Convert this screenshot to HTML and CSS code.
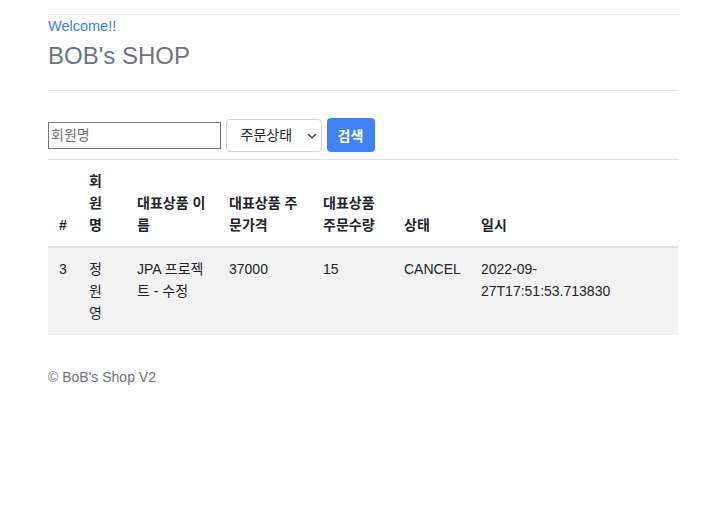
FILE: index.html
```html
<!DOCTYPE html>
<html lang="ko">
<head>
<meta charset="utf-8">
<title>BOB's SHOP</title>
<link rel="stylesheet" href="styles.css">
</head>
<body>
<div class="container">
  <header class="header">
    <a class="welcome" href="#">Welcome!!</a>
    <h3 class="brand">BOB's SHOP</h3>
  </header>

  <form class="search" onsubmit="return false">
    <input class="name-input" type="text" placeholder="회원명">
    <div class="select-wrap">
      <select class="status-select">
        <option>주문상태</option>
        <option>ORDER</option>
        <option>CANCEL</option>
      </select>
      <svg class="chevron" viewBox="0 0 16 16" width="10" height="10" aria-hidden="true">
        <path d="M2.5 5.5l5.5 5.5 5.5-5.5" fill="none" stroke="#343a40" stroke-width="2.2" stroke-linecap="round" stroke-linejoin="round"/>
      </svg>
    </div>
    <button class="btn-search" type="submit">검색</button>
  </form>

  <table class="orders">
    <colgroup>
      <col class="c-id">
      <col class="c-member">
      <col class="c-item">
      <col class="c-price">
      <col class="c-qty">
      <col class="c-status">
      <col class="c-date">
    </colgroup>
    <thead>
      <tr>
        <th>#</th>
        <th class="narrow">회원명</th>
        <th class="tight">대표상품 이름</th>
        <th class="tight2">대표상품 주문가격</th>
        <th>대표상품 주문수량</th>
        <th class="tight2">상태</th>
        <th class="wide">일시</th>
      </tr>
    </thead>
    <tbody>
      <tr>
        <td>3</td>
        <td class="narrow">정원영</td>
        <td class="tight">JPA 프로젝트 - 수정</td>
        <td class="tight2">37000</td>
        <td>15</td>
        <td class="tight2">CANCEL</td>
        <td class="wide">2022-09-27T17:51:53.713830</td>
      </tr>
    </tbody>
  </table>

  <footer class="footer">© BoB's Shop V2</footer>
</div>
</body>
</html>
```

FILE: styles.css
```css
*, *::before, *::after {
  box-sizing: border-box;
}

html, body {
  margin: 0;
  padding: 0;
  background: #ffffff;
}

body {
  font-family: "Liberation Sans", "Noto Sans CJK KR", sans-serif;
  font-size: 14px;
  line-height: 21px;
  color: #212529;
}

.container {
  width: 630px;
  margin: 14px 44px 0 48px;
}

/* header */
.header {
  border-top: 1px solid #e5e5e5;
  border-bottom: 1px solid #e5e5e5;
  padding-bottom: 20px;
}

.welcome {
  display: block;
  color: #3b7ef6;
  text-decoration: none;
  font-size: 14.5px;
  line-height: 22px;
}

.brand {
  margin: 4px 0 0;
  font-size: 24px;
  line-height: 29px;
  font-weight: 400;
  color: #6c757d;
}

/* search form */
.search {
  display: flex;
  align-items: center;
  gap: 4px;
  margin-top: 27px;
  height: 34px;
}

.name-input {
  width: 173px;
  height: 27px;
  margin: 0;
  padding: 1px 2px;
  border: 1px solid #767676;
  border-radius: 0;
  font-family: inherit;
  font-size: 14px;
  color: #212529;
  background: #fff;
  outline: none;
}

.name-input::placeholder {
  color: #6f6f6f;
}

.select-wrap {
  position: relative;
  margin-left: 0.5px;
}

.status-select {
  display: block;
  width: 96px;
  height: 33px;
  margin: 0;
  padding: 0 22px 0 14px;
  border: 1px solid #ced4da;
  border-radius: 4px;
  background: #fff;
  font-family: inherit;
  font-size: 14px;
  color: #212529;
  appearance: none;
  -webkit-appearance: none;
  outline: none;
}

.chevron {
  position: absolute;
  right: 5px;
  top: 12px;
  pointer-events: none;
}

.btn-search {
  width: 48px;
  height: 34px;
  margin: 0 0 0 1px;
  padding: 0;
  border: none;
  border-radius: 4px;
  background: #3f82f7;
  color: #ffffff;
  font-family: inherit;
  font-size: 14px;
  font-weight: 600;
  cursor: pointer;
}

/* table */
.orders {
  width: 630px;
  margin-top: 7px;
  border-collapse: collapse;
  table-layout: fixed;
}

.c-id { width: 30px; }
.c-member { width: 48px; }
.c-item { width: 92px; }
.c-price { width: 94px; }
.c-qty { width: 81px; }
.c-status { width: 77px; }
.c-date { width: 208px; }

.orders th,
.orders td {
  padding: 10px 11px;
  line-height: 22px;
  text-align: left;
  border-top: 1px solid #dee2e6;
}

.orders th {
  font-weight: 700;
  vertical-align: bottom;
  border-bottom: 2px solid #dee2e6;
}

.orders td {
  vertical-align: top;
  background: #f2f2f2;
  padding-bottom: 11px;
}

.orders .narrow { padding-right: 13px; }
.orders .tight { padding-right: 6px; }
.orders .tight2 { padding-right: 8px; }
.orders .wide { padding-right: 40px; }

/* footer */
.footer {
  margin-top: 32px;
  color: #6c757d;
  line-height: 21px;
}
```
